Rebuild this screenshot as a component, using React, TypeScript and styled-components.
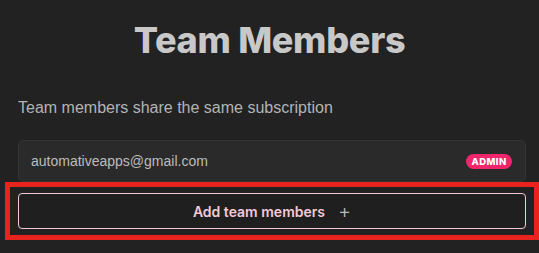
import React from 'react'
import styled, { createGlobalStyle } from 'styled-components'

const GlobalStyle = createGlobalStyle`
    html, body {
        margin: 0;
        padding: 0;
        background: #222222;
    }
    body {
        font-family: Inter, "Noto Sans", sans-serif;
        -webkit-font-smoothing: antialiased;
    }
`

const Page = styled.div`
    width: 539px;
    height: 253px;
    box-sizing: border-box;
    padding: 18px 0 0;
    background: #222222;
`

const Title = styled.h1`
    margin: 0;
    text-align: center;
    font-size: 36px;
    font-weight: 800;
    line-height: 44px;
    letter-spacing: -0.3px;
    color: #c8c8c8;
`

const Subtitle = styled.p`
    margin: 36px 0 0 18px;
    font-family: "Liberation Sans", Arial, sans-serif;
    font-size: 16px;
    line-height: 20px;
    color: #b4b4b4;
`

const List = styled.ul`
    list-style: none;
    margin: 22px 13px 0 18px;
    padding: 0;
`

const MemberRow = styled.li`
    box-sizing: border-box;
    height: 42px;
    display: flex;
    align-items: center;
    justify-content: space-between;
    padding: 0 13px 0 12px;
    background: #2a2a2a;
    border: 1px solid #333333;
    border-radius: 5px;
`

const Email = styled.span`
    font-family: "Liberation Sans", Arial, sans-serif;
    font-size: 14px;
    color: #bcbcbc;
`

const Badge = styled.span`
    box-sizing: border-box;
    display: inline-flex;
    align-items: center;
    justify-content: center;
    width: 46px;
    height: 15px;
    border-radius: 8px;
    background: #f0256b;
    color: #ffffff;
    font-size: 9.5px;
    font-weight: 800;
    letter-spacing: 0.4px;
`

const Highlight = styled.div`
    box-sizing: border-box;
    margin: 0 0 0 5px;
    height: 58px;
    padding: 6px 8px 6px 8px;
    border: 5px solid #e8231d;
`

const AddButton = styled.button`
    box-sizing: border-box;
    width: 100%;
    height: 36px;
    display: flex;
    align-items: center;
    justify-content: center;
    gap: 13px;
    background: #1f1f1f;
    border: 1px solid #f3c9d8;
    border-radius: 4px;
    color: #f3c9d8;
    font-family: Inter, "Noto Sans", sans-serif;
    font-size: 14px;
    font-weight: 600;
    cursor: pointer;
`

const Plus = styled.span`
    font-size: 20px;
    font-weight: 300;
    line-height: 1;
    color: #c9b4bc;
`

const App: React.FC = () => {
    return (
        <Page>
            <GlobalStyle />
            <Title>Team Members</Title>
            <Subtitle>Team members share the same subscription</Subtitle>

            <List>
                <MemberRow>
                    <Email>automativeapps@gmail.com</Email>
                    <Badge>ADMIN</Badge>
                </MemberRow>
            </List>

            <Highlight>
                <AddButton>
                    Add team members <Plus>+</Plus>
                </AddButton>
            </Highlight>
        </Page>
    )
}

export default App
